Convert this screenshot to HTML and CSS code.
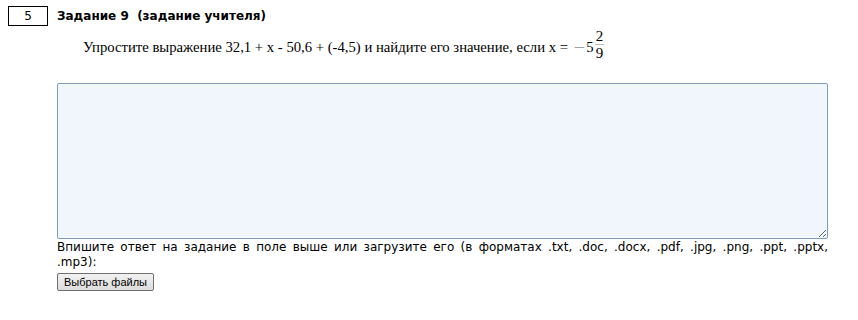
FILE: index.html
```html
<!DOCTYPE html>
<html lang="ru">
<head>
    <meta charset="UTF-8">
    <title>Задание 9</title>
    <link rel="stylesheet" href="styles.css">
</head>
<body>
    <div class="task">
        <div class="task-head">
            <div class="task-num">5</div>
            <div class="task-title">Задание 9&nbsp; (задание учителя)</div>
        </div>
        <div class="task-body">
            <p class="question">Упростите выражение 32,1 + x - 50,6 + (-4,5) и найдите его значение, если x =
                <span class="math"><span class="minus">&minus;</span>5<span class="frac"><span class="num">2</span><span class="den">9</span></span></span>
            </p>
            <textarea class="answer"></textarea>
            <p class="hint">Впишите ответ на задание в поле выше или загрузите его (в форматах .txt, .doc, .docx, .pdf, .jpg, .png, .ppt, .pptx, .mp3):</p>
            <button type="button" class="file-button">Выбрать файлы</button>
        </div>
    </div>
</body>
</html>
```

FILE: styles.css
```css
body {
    margin: 0;
    padding: 6px 8px;
    background: #fff;
    font-family: "DejaVu Sans", Verdana, sans-serif;
    color: #000;
}
.task-head {
    display: flex;
    align-items: center;
    gap: 9px;
}
.task-num {
    width: 38px;
    height: 18px;
    border: 1px solid #000;
    text-align: center;
    font-size: 12px;
    line-height: 18px;
}
.task-title {
    font-weight: bold;
    font-size: 12px;
}
.task-body {
    margin-left: 49px;
    width: 771px;
}
.question {
    margin: 8px 0 0 26px;
    font-family: "Liberation Serif", "Times New Roman", serif;
    font-size: 14.7px;
    display: flex;
    align-items: center;
    gap: 7px;
}
.math {
    display: inline-flex;
    align-items: center;
}
.minus {
    color: #888;
    margin-right: 3px;
    transform: scaleX(1.4);
}
.frac {
    display: inline-flex;
    flex-direction: column;
    align-items: center;
    font-size: 15px;
    line-height: 13px;
    margin-left: 1px;
    margin-top: -4px;
}
.num {
    border-bottom: 1px solid #bbb;
    padding: 0 1px 1px;
}
.den {
    padding-top: 2px;
}
.answer {
    display: block;
    box-sizing: border-box;
    width: 771px;
    height: 156px;
    margin-top: 23px;
    border: 1px solid #7f9db9;
    border-radius: 2px;
    background: #f1f6fd;
    resize: vertical;
}
.hint {
    margin: 1px 0 0;
    font-size: 12px;
    line-height: 15px;
    text-align: justify;
    word-spacing: 2px;
}
.file-button {
    margin-top: 3px;
    height: 18px;
    padding: 0 6px;
    font-family: "Liberation Sans", Arial, sans-serif;
    font-size: 11px;
    border: 1px solid #707070;
    border-radius: 2px;
    background: linear-gradient(#f2f2f2, #dcdcdc);
}
```
